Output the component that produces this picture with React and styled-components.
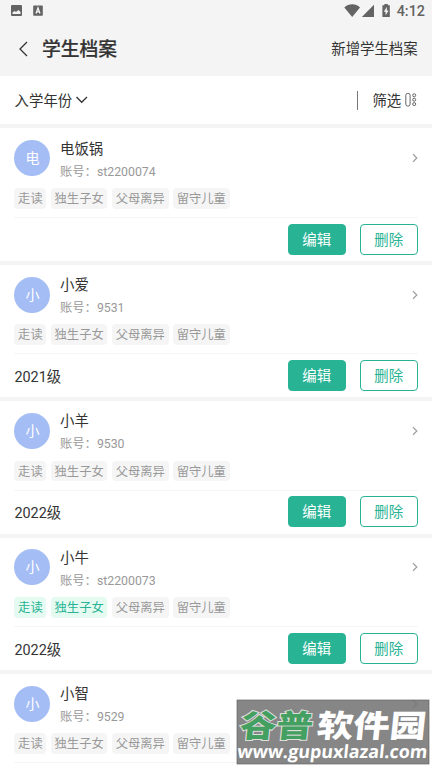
import React from 'react';
import styled, { createGlobalStyle } from 'styled-components';

const GlobalStyle = createGlobalStyle`
  * {
    box-sizing: border-box;
  }
  body {
    margin: 0;
    background: #fff;
    color: #333;
    font-family: Roboto, "Noto Sans CJK SC", sans-serif;
  }
`
const Screen = styled.div`
  position: relative;
  width: 432px;
  height: 768px;
  overflow: hidden;
`
const StatusBar = styled.div`
  display: flex;
  justify-content: space-between;
  height: 22px;
  padding: 0 7px 0 11px;
  background: #f4f4f4;
`
const StatusIcon = styled.svg`
  display: block;
  flex: none;
`
const Clock = styled.span`
  margin-left: 6px;
  color: #636363;
  font-size: 14.4px;
  font-weight: 500;
  line-height: 24px;
`
const StatusGroup = styled.div`
  display: flex;
`
const Header = styled.header`
  display: flex;
  align-items: center;
  height: 53.6px;
  padding: 0 14.4px 0 18px;
  background: #f4f4f4;
`
const Title = styled.h1`
  flex: 1;
  margin: 0 0 0 12px;
  padding-top: 3px;
  font-size: 18.8px;
  font-weight: 500;
  line-height: 26px;
  -webkit-text-stroke: 0.2px #333;
`
const HeaderLink = styled.span`
  padding-top: 3px;
  font-size: 14.4px;
  line-height: 20px;
`
const FilterBar = styled.div`
  display: flex;
  align-items: center;
  justify-content: space-between;
  height: 48.9px;
  padding: 0 13.8px 0 14.6px;
  font-size: 14.4px;
  line-height: 20px;
`
const FilterItem = styled.div`
  display: flex;
  align-items: center;
`
const FilterText = styled.span`
  padding-top: 3px;
`
const Divider = styled.span`
  width: 1.2px;
  height: 19px;
  margin-right: 14.3px;
  background: #777;
`
const Card = styled.section`
  height: 136.35px;
  padding: 0 14.4px;
  border-top: 4.3px solid #f4f4f4;
`
const Profile = styled.div`
  display: flex;
  align-items: center;
  height: 59.6px;
`
const Avatar = styled.div`
  width: 36px;
  height: 36px;
  margin-right: 9.6px;
  border-radius: 50%;
  background: #a5bdf5;
  color: #fff;
  font-size: 14px;
  line-height: 37px;
  text-align: center;
`
const Info = styled.div`
  flex: 1;
  padding-top: 3.5px;
`
const Name = styled.div`
  font-size: 14.4px;
  line-height: 23px;
`
const Account = styled.div`
  color: #999;
  font-size: 12.3px;
  line-height: 22px;
`
const Tags = styled.div`
  display: flex;
  gap: 4.5px;
  height: 30px;
  border-bottom: 1px solid #f6f6f6;
`
const Tag = styled.span`
  height: 20.6px;
  padding: 0 3.7px;
  border-radius: 4px;
  background: ${props => props.$active ? '#e5faf0' : '#f5f5f5'};
  color: ${props => props.$active ? '#27b394' : '#999'};
  font-size: 12.3px;
  line-height: 22.6px;
`
const Actions = styled.div`
  display: flex;
  align-items: center;
  height: 42.4px;
`
const Grade = styled.span`
  flex: 1;
  font-size: 14.4px;
`
const Button = styled.button`
  width: 57.8px;
  height: 31px;
  margin-left: ${props => props.$primary ? 0 : '14.2px'};
  padding: 2px 0 0;
  border: 1.2px solid #27b394;
  border-radius: 4px;
  background: ${props => props.$primary ? '#27b394' : '#fff'};
  color: ${props => props.$primary ? '#fff' : '#27b394'};
  font-family: inherit;
  font-size: 14.4px;
  line-height: 28px;
`
const Watermark = styled.svg`
  position: absolute;
  left: 236px;
  top: 699px;
`

const TAGS = ['走读', '独生子女', '父母离异', '留守儿童'];

const students = [
  { name: '电饭锅', account: 'st2200074', grade: '', active: [] },
  { name: '小爱', account: '9531', grade: '2021级', active: [] },
  { name: '小羊', account: '9530', grade: '2022级', active: [] },
  { name: '小牛', account: 'st2200073', grade: '2022级', active: ['走读', '独生子女'] },
  { name: '小智', account: '9529', grade: null, active: [] },
];

function Student({ student }) {
  return (
    <Card>
      <Profile>
        <Avatar>{student.name[0]}</Avatar>
        <Info>
          <Name>{student.name}</Name>
          <Account>账号：{student.account}</Account>
        </Info>
        <svg width="6" height="10" viewBox="0 0 6 10" fill="none" stroke="#999" strokeWidth="1.2">
          <path d="M1 1.2 4.8 5 1 8.8" />
        </svg>
      </Profile>
      <Tags>
        {TAGS.map(tag => (
          <Tag key={tag} $active={student.active.includes(tag)}>{tag}</Tag>
        ))}
      </Tags>
      {student.grade !== null && (
        <Actions>
          <Grade>{student.grade}</Grade>
          <Button $primary>编辑</Button>
          <Button>删除</Button>
        </Actions>
      )}
    </Card>
  )
}

function App() {
  return (
    <Screen>
      <GlobalStyle />
      <StatusBar>
        <StatusIcon width="34" height="22">
          <rect x="0" y="5" width="11" height="11" rx="1" fill="#636363" />
          <path d="M1.5 14v-1.5l2-1.5 1.5 1 2.5-2 2 2V14z" fill="#f4f4f4" />
          <rect x="22.2" y="5.5" width="9.6" height="10.3" rx="0.8" fill="#636363" />
          <path d="m25 13.5 2-5.5 2 5.5M25.8 11.8h2.6" fill="none" stroke="#f4f4f4" strokeWidth="1.3" />
        </StatusIcon>
        <StatusGroup>
          <StatusIcon width="47" height="22" fill="#636363">
            <path d="M0.3 7.5C4.7 3.2 11.8 3.2 16 7.5L8.2 17z" />
            <path d="M30 4.7V17H17.8z" />
            <path d="M38.4 5.2h2V4h3.4v1.2h2V17h-7.4z" />
            <path d="m42.8 6.7-3 5h1.8v3.8l3-5h-1.8z" fill="#f4f4f4" />
          </StatusIcon>
          <Clock>4:12</Clock>
        </StatusGroup>
      </StatusBar>
      <Header>
        <svg width="12" height="18" viewBox="0 0 12 18" fill="none" stroke="#333" strokeWidth="1.3">
          <path d="M9 2 2 9l7 7" />
        </svg>
        <Title>学生档案</Title>
        <HeaderLink>新增学生档案</HeaderLink>
      </Header>
      <FilterBar>
        <FilterItem>
          <FilterText>入学年份</FilterText>
          <svg width="16" height="10" viewBox="0 0 16 10" fill="none" stroke="#333" strokeWidth="1.3">
            <path d="m4.5 2 5.2 5.3L15 2" />
          </svg>
        </FilterItem>
        <FilterItem>
          <Divider />
          <FilterText>筛选</FilterText>
          <svg width="17" height="16" viewBox="0 0 17 16" fill="none" stroke="#555" strokeWidth="0.9">
            <rect x="4.8" y="1.3" width="4.3" height="12.8" rx="2" />
            <circle cx="13.2" cy="3.3" r="1.5" />
            <circle cx="13.2" cy="7.7" r="1.5" />
            <circle cx="13.2" cy="12.1" r="1.5" />
          </svg>
        </FilterItem>
      </FilterBar>
      {students.map(student => (
        <Student key={student.account} student={student} />
      ))}
      <Watermark width="194" height="67" fontFamily='"Noto Sans CJK SC", sans-serif' fontWeight="900">
        <rect x="1" y="1" width="192" height="64" fill="#747474" fillOpacity="0.87" stroke="#666" strokeWidth="0.7" />
        <g fontSize="31" transform="skewX(-6)">
          <text x="7" y="38" textLength="73" lengthAdjust="spacingAndGlyphs" fill="#44a060" stroke="#ddd" strokeWidth="2" paintOrder="stroke">谷普</text>
          <text x="84" y="38" textLength="109" lengthAdjust="spacingAndGlyphs" fill="#fff">软件园</text>
        </g>
        <text x="7" y="59" transform="skewX(-6)" textLength="190" lengthAdjust="spacingAndGlyphs" fill="#fff" fontFamily='"Open Sans", sans-serif' fontSize="18" fontWeight="700">www.gupuxlazal.com</text>
      </Watermark>
    </Screen>
  )
}

export default App;
